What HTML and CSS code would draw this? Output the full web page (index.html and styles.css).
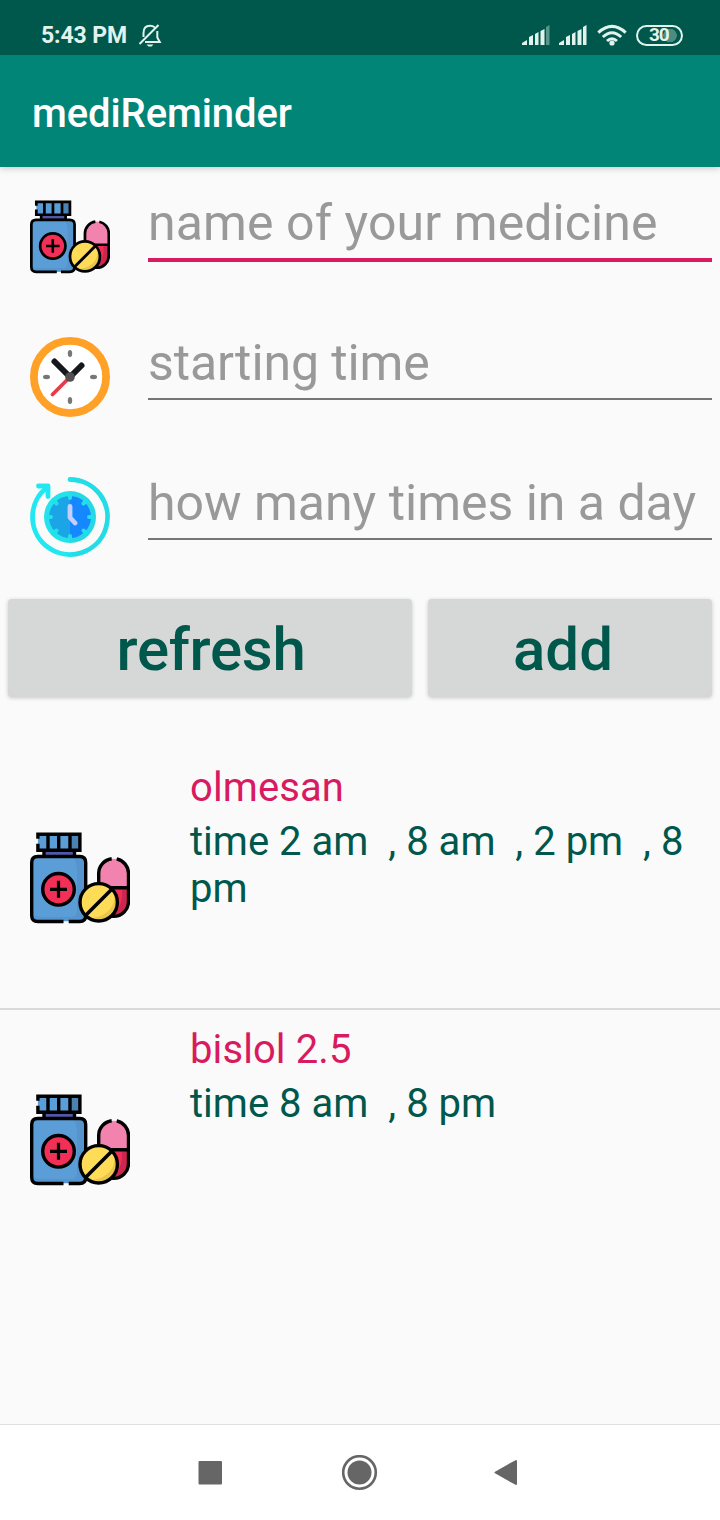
FILE: index.html
```html
<!DOCTYPE html>
<html lang="en">
<head>
<meta charset="utf-8">
<title>mediReminder</title>
<link rel="stylesheet" href="styles.css">
</head>
<body>
<svg class="sprite" width="0" height="0">
  <symbol id="medicine" viewBox="0 0 100 100">
    <path d="M14 22h30.500v7H14z" fill="#5358a6" stroke="#000" stroke-width="3.4"/>
    <path d="M7.900 6.200h42v16h-42z" fill="#5b9dd7"/>
    <path d="M40 6.200h9.900v16H40z" fill="#4b82b4"/>
    <path d="M7.900 10.800V6.200h42v16h-42v-6.500M18 6v16M28.700 6v16M40 6v16" fill="none" stroke="#000" stroke-width="3.4"/>
    <rect x="1.700" y="28.500" width="54" height="64.800" rx="6" fill="#5b9dd7"/>
    <path d="M3 86q2 3 8 3h31q5 0 5-7V43q0-8-3-13h5q6 0 6 6v51q0 6-6 6H8q-5 0-5-7z" fill="#5594cd"/>
    <path d="M33.500 93.500H7.700q-6 0-6-6V34.500q0-6 6-6h42q6 0 6 6v53q0 6-6 6H38.700" fill="none" stroke="#000" stroke-width="3.4"/>
    <circle cx="28.500" cy="61.300" r="15.800" fill="#f22f56" stroke="#000" stroke-width="3.4"/>
    <path d="M20 61.300h17M28.500 52.800v17" stroke="#000" stroke-width="3.2"/>
    <path d="M69 59.700V45.500a14.750 14.750 0 0 1 29.500 0v14.200z" fill="#f283ae"/>
    <path d="M69 59.700h29.500v14a14.750 14.750 0 0 1-29.500 0z" fill="#ef2f56"/>
    <path d="M92 59.700h6.500v14q0 11-10 14-4 1-7 0 10-8 10.500-20z" fill="#cf2650"/>
    <path d="M81.700 30.800A14.900 14.900 0 0 0 68.700 45.500v28a14.900 14.900 0 0 0 29.800 0v-28a14.900 14.900 0 0 0-11.800-14.600M69 59.700h29.500" fill="none" stroke="#000" stroke-width="3.4"/>
    <circle cx="68.700" cy="74.300" r="18.700" fill="#ffdc57"/>
    <path d="M83 62q4 14-6 22-7 6-18 6 7 5 17 2 10-4 11-15 1-9-4-15z" fill="#e8c64c"/>
    <circle cx="68.700" cy="74.300" r="18.700" fill="none" stroke="#000" stroke-width="3.4"/>
    <path d="M55.500 87.500l26.500-26.500" stroke="#000" stroke-width="3.600"/>
  </symbol>
</svg>

<div class="screen">
  <header class="status">
    <span class="status-time">5:43 PM</span>
    <svg class="bell" width="24" height="26" viewBox="0 0 24 26" fill="none" stroke="#e2f3ee" stroke-width="2">
      <path d="M5.500 15V11q0-7.300 6.500-7.300 3 0 4.600 1.700M19.300 9v6.500l2.500 4.500H7M1.500 22L20.500 3"/>
      <path d="M8.500 22.500h7l-2 2h-3z" fill="#e2f3ee" stroke="none"/>
    </svg>
    <div class="status-icons">
      <svg width="29" height="20" viewBox="0 0 29 20" fill="#e2f3ee"><path d="M0 20v-2l5-3v5zM7 20v-8l4-2v10zM13 20V9l3.500-2v13zM18.500 20V6l4-2v16z"/><path d="M24 20V2l3.500-2v20z" opacity=".4"/></svg>
      <svg width="29" height="20" viewBox="0 0 29 20" fill="#e2f3ee"><path d="M0 20v-2l5-3v5zM7 20v-8l4-2v10zM13 20V9l3.500-2v13zM18.500 20V6l4-2v16zM24 20V2l3.500-2v20z"/></svg>
      <svg class="wifi" width="30" height="22" viewBox="0 0 30 22" fill="none" stroke="#e2f3ee" stroke-width="3"><path d="M1.300 8.600q13.700-12.500 27.400 0M5.800 13q9.200-8.500 18.400 0M10 17q5-4.500 10 0"/><circle cx="15" cy="19" r="2.600" fill="#e2f3ee" stroke="none"/></svg>
      <span class="battery">30</span>
    </div>
  </header>
  <div class="appbar">mediReminder</div>

  <main class="content">
    <div class="field focused">
      <svg class="field-icon"><use href="#medicine"/></svg>
      <div class="input"><span class="hint hint-name">name of your medicine</span></div>
    </div>
    <div class="field">
      <svg class="field-icon" viewBox="0 0 80 80">
        <circle cx="40" cy="40" r="36.100" fill="#fff" stroke="#ffa126" stroke-width="7.800"/>
        <g fill="#777"><ellipse cx="40" cy="16.500" rx="2.200" ry="3.500"/><ellipse cx="40" cy="63.500" rx="2.200" ry="3.500"/><ellipse cx="16.500" cy="40" rx="3.500" ry="2.200"/><ellipse cx="63.500" cy="40" rx="3.500" ry="2.200"/></g>
        <path d="M40 40L24.500 24.500M40 40l11.500-11.500" stroke="#15191c" stroke-width="6" stroke-linecap="round"/>
        <path d="M40 40L22.500 57.500" stroke="#e73b4b" stroke-width="3.800" stroke-linecap="round"/>
        <circle cx="40" cy="40" r="4.800" fill="#554f50"/>
      </svg>
      <div class="input"><span class="hint hint-start">starting time</span></div>
    </div>
    <div class="field">
      <svg class="field-icon" viewBox="0 0 80 80">
        <defs>
          <linearGradient id="ring" x1="0" x2="1"><stop offset=".45" stop-color="#20e7f1"/><stop offset=".55" stop-color="#24dce6"/></linearGradient>
        </defs>
        <path d="M40 2.500A37.500 37.500 0 1 1 17 10.400" fill="none" stroke="url(#ring)" stroke-width="4.800" stroke-linecap="round"/>
        <path d="M8.500 9h9.500v10.500" fill="none" stroke="#20e7f1" stroke-width="4.800" stroke-linecap="round" stroke-linejoin="round"/>
        <path d="M40 14a26 26 0 0 0 0 52z" fill="#22e3ec"/><path d="M40 14a26 26 0 0 1 0 52z" fill="#25d8e3"/>
        <path d="M40 19a21 21 0 0 0 0 42z" fill="#1ba5e6"/><path d="M40 19a21 21 0 0 1 0 42z" fill="#1688ff"/>
        <g stroke="#22dfe9" stroke-width="4" stroke-linecap="round"><path d="M40 18v3M40 59v3M18 40h3M59 40h3M24.500 24.500l2 2M53.500 53.500l2 2M24.500 55.500l2-2M53.500 26.500l2-2"/></g>
        <path d="M40 29.500v11l5 5.500" fill="none" stroke="#c4cfff" stroke-width="4.800" stroke-linecap="round" stroke-linejoin="round"/>
      </svg>
      <div class="input"><span class="hint hint-count">how many times in a day</span></div>
    </div>

    <div class="buttons">
      <button class="btn btn-refresh">refresh</button>
      <button class="btn btn-add">add</button>
    </div>

    <div class="list">
      <div class="item">
        <svg class="item-icon"><use href="#medicine"/></svg>
        <div class="item-text">
          <div class="name">olmesan</div>
          <div class="times">time 2 am&nbsp; , 8 am&nbsp; , 2 pm&nbsp; , 8<br>pm</div>
        </div>
      </div>
      <div class="item">
        <svg class="item-icon"><use href="#medicine"/></svg>
        <div class="item-text">
          <div class="name">bislol 2.5</div>
          <div class="times">time 8 am&nbsp; , 8 pm</div>
        </div>
      </div>
    </div>
  </main>

  <nav class="nav">
    <svg width="24" height="24"><rect x=".5" y="0" width="23.500" height="23.500" rx="1" fill="#666"/></svg>
    <svg class="home" width="36" height="36"><circle cx="17.500" cy="17.500" r="16.300" fill="none" stroke="#666" stroke-width="2.600"/><circle cx="17.500" cy="17.500" r="12" fill="#666"/></svg>
    <svg width="24" height="28"><path d="M1.500 13.500L22 2v23z" fill="#666" stroke="#666" stroke-width="2" stroke-linejoin="round"/></svg>
  </nav>
</div>
</body>
</html>
```
FILE: styles.css
```css
* { box-sizing: border-box; }
body { margin: 0; background: #fafafa; font-family: Roboto, sans-serif; }
svg { display: block; flex: none; }
.sprite { position: absolute; }
.screen { width: 720px; height: 1520px; display: flex; flex-direction: column; overflow: hidden; }

.status { height: 55px; flex: none; background: #00574b; color: #e2f3ee; display: flex; align-items: center; padding: 15px 37px 0 41px; }
.status-time { font-size: 23px; font-weight: 700; letter-spacing: -0.1px; width: 97px; white-space: nowrap; }
.status-icons { margin-left: auto; display: flex; align-items: center; gap: 8px; }
.wifi { margin-left: 1px; }
.battery { width: 47px; height: 21px; margin-left: 1px; border: 2px solid #e2f3ee; border-radius: 11px; padding-left: 11px; background: radial-gradient(circle at 32px 8.5px, #4b8b82 6.5px, transparent 7px); font-size: 19px; font-weight: 700; line-height: 16px; letter-spacing: -1.2px; }

.appbar { height: 112px; flex: none; background: #008577; color: #fff; font-size: 40px; font-weight: 500; line-height: 118px; letter-spacing: -0.1px; padding-left: 32px; box-shadow: 0 1px 7px rgba(0, 0, 0, 0.22); clip-path: inset(0 0 -12px 0); }

.content { flex: 1; display: flex; flex-direction: column; }
.field { height: 140px; display: flex; align-items: flex-start; padding: 30px 8px 0 30px; }
.field-icon { width: 80px; height: 80px; margin-right: 38px; }
.input { flex: 1; height: 63px; border-bottom: 2px solid #757575; color: #999; font-size: 50px; line-height: 52px; white-space: nowrap; }
.focused .input { height: 65px; border-bottom: 4px solid #d81b60; }
.hint-name { letter-spacing: 0.09px; }
.hint-start { letter-spacing: -0.1px; }
.hint-count { letter-spacing: -0.01px; }

.buttons { display: grid; grid-template-columns: 404px 284px; gap: 16px; padding: 12px 8px 0; }
.btn { height: 98px; border: 0; border-radius: 4px; background: #d6d8d7; color: #00574b; font: 500 60px/94px Roboto, sans-serif; padding: 4px 0 0; box-shadow: 0 1px 4px rgba(0, 0, 0, 0.2); }
.btn-refresh { padding-left: 2px; letter-spacing: -0.3px; }
.btn-add { padding-right: 14px; }

.list { margin-top: 51px; }
.item { height: 262px; display: flex; padding: 10px 0 0 30px; border-bottom: 2px solid #dadada; }
.item:last-child { border-bottom: 0; }
.item-icon { width: 100px; height: 100px; margin: 70px 60px 0 0; }
.item-text { padding-top: 6px; font-size: 40px; line-height: 47px; white-space: nowrap; }
.name { color: #d81b60; letter-spacing: 0.1px; }
.times { color: #00574b; margin-top: 7px; letter-spacing: 0.02px; }

.nav { height: 96px; flex: none; background: #fff; border-top: 1px solid #e0e0e0; display: flex; align-items: center; justify-content: space-between; padding: 0 202px 0 198px; }
.home { margin-left: 3px; }
```
